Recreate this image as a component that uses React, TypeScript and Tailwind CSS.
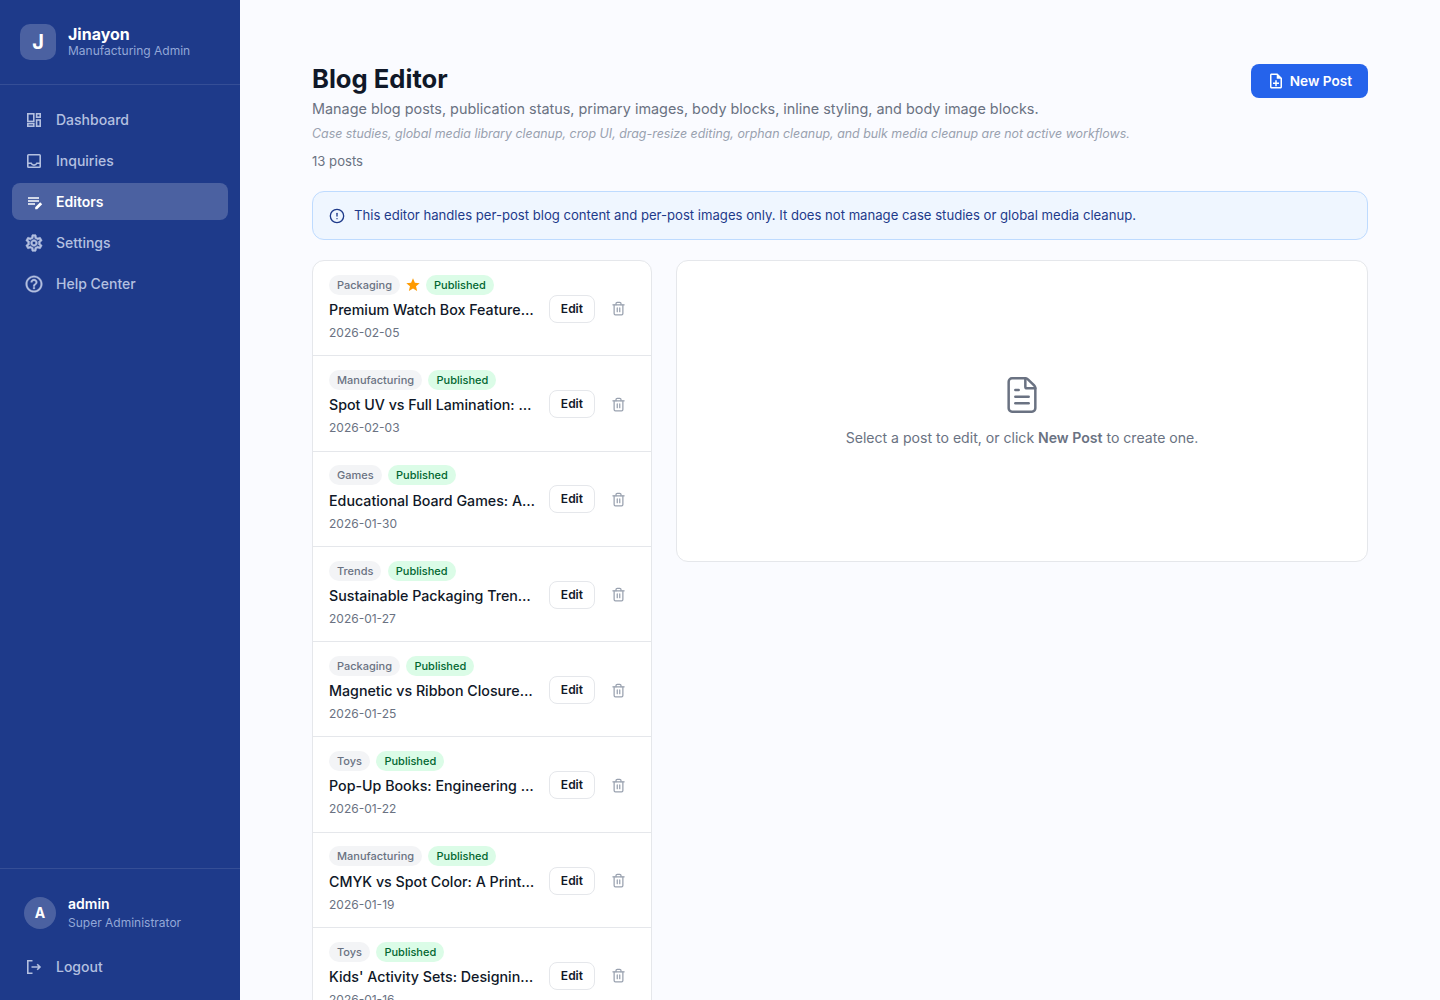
import { CircleAlert, FileText, Trash2 } from 'lucide-react';
import { MdOutlineNoteAdd, MdStar } from 'react-icons/md';

function DashboardIcon({ className }: { className?: string }) {
	return (
		<svg viewBox="0 0 20 20" fill="none" stroke="currentColor" strokeWidth="1.6" className={className}>
			<rect x="3.8" y="3.8" width="6" height="7.6" />
			<rect x="12.6" y="3.8" width="3.6" height="3.4" />
			<rect x="3.8" y="13.6" width="6" height="2.6" />
			<rect x="12.6" y="10" width="3.6" height="6.2" />
		</svg>
	);
}

function InboxIcon({ className }: { className?: string }) {
	return (
		<svg viewBox="0 0 20 20" fill="none" stroke="currentColor" strokeWidth="1.6" className={className}>
			<rect x="3.8" y="3.8" width="12.4" height="12.4" rx="0.8" />
			<path d="M4 12.2h3.2c.5 1.2 1.5 1.9 2.8 1.9s2.3-.7 2.8-1.9H16" />
		</svg>
	);
}

function EditNoteIcon({ className }: { className?: string }) {
	return (
		<svg viewBox="0 0 20 20" className={className}>
			<path d="M4 6h11M4 9h11M4 12h7" fill="none" stroke="currentColor" strokeWidth="1.5" />
			<path d="M11.2 17.2v-2l5-5 2 2-5 5z" fill="currentColor" />
		</svg>
	);
}

function SettingsIcon({ className }: { className?: string }) {
	return (
		<svg viewBox="0 0 24 24" fill="currentColor" stroke="currentColor" strokeWidth="0.7" className={className}>
			<path d="M19.43 12.98c.04-.32.07-.64.07-.98 0-.34-.03-.66-.07-.98l2.11-1.65c.19-.15.24-.42.12-.64l-2-3.46c-.09-.16-.26-.25-.44-.25-.06 0-.12.01-.17.03l-2.49 1c-.52-.4-1.08-.73-1.69-.98l-.38-2.65C14.46 2.18 14.25 2 14 2h-4c-.25 0-.46.18-.49.42l-.38 2.65c-.61.25-1.17.59-1.69.98l-2.49-1c-.06-.02-.12-.03-.18-.03-.17 0-.34.09-.43.25l-2 3.46c-.13.22-.07.49.12.64l2.11 1.65c-.04.32-.07.65-.07.98 0 .33.03.66.07.98l-2.11 1.65c-.19.15-.24.42-.12.64l2 3.46c.09.16.26.25.44.25.06 0 .12-.01.17-.03l2.49-1c.52.4 1.08.73 1.69.98l.38 2.65c.03.24.24.42.49.42h4c.25 0 .46-.18.49-.42l.38-2.65c.61-.25 1.17-.59 1.69-.98l2.49 1c.06.02.12.03.18.03.17 0 .34-.09.43-.25l2-3.46c.12-.22.07-.49-.12-.64l-2.11-1.65zm-1.98-1.71c.04.31.05.52.05.73 0 .21-.02.43-.05.73l-.14 1.13.89.7 1.08.84-.7 1.21-1.27-.51-1.04-.42-.9.68c-.43.32-.84.56-1.25.73l-1.06.43-.16 1.13-.2 1.35h-1.4l-.19-1.35-.16-1.13-1.06-.43c-.43-.18-.83-.41-1.23-.71l-.91-.7-1.06.43-1.27.51-.7-1.21 1.08-.84.89-.7-.14-1.13c-.03-.31-.05-.54-.05-.74s.02-.43.05-.73l.14-1.13-.89-.7-1.08-.84.7-1.21 1.27.51 1.04.42.9-.68c.43-.32.84-.56 1.25-.73l1.06-.43.16-1.13.2-1.35h1.39l.19 1.35.16 1.13 1.06.43c.43.18.83.41 1.23.71l.91.7 1.06-.43 1.27-.51.7 1.21-1.07.85-.89.7.14 1.13zM12 8c-2.21 0-4 1.79-4 4s1.79 4 4 4 4-1.79 4-4-1.79-4-4-4zm0 6c-1.1 0-2-.9-2-2s.9-2 2-2 2 .9 2 2-.9 2-2 2z" />
		</svg>
	);
}

function HelpIcon({ className }: { className?: string }) {
	return (
		<svg viewBox="0 0 24 24" fill="currentColor" stroke="currentColor" strokeWidth="0.4" className={className}>
			<path d="M11 18h2v-2h-2v2zm1-16C6.48 2 2 6.48 2 12s4.48 10 10 10 10-4.48 10-10S17.52 2 12 2zm0 18c-4.41 0-8-3.59-8-8s3.59-8 8-8 8 3.59 8 8-3.59 8-8 8zm0-14c-2.21 0-4 1.79-4 4h2c0-1.1.9-2 2-2s2 .9 2 2c0 2-3 1.75-3 5h2c0-2.25 3-2.5 3-5 0-2.21-1.79-4-4-4z" />
		</svg>
	);
}

function LogoutIcon({ className }: { className?: string }) {
	return (
		<svg viewBox="0 0 20 20" fill="none" stroke="currentColor" strokeWidth="1.6" className={className}>
			<path d="M8.5 3.8H3.8v12.4h4.7" />
			<path d="M7.5 10h8.5M13.2 7.2 16 10l-2.8 2.8" />
		</svg>
	);
}

const navItems = [
	{ label: 'Dashboard', icon: DashboardIcon },
	{ label: 'Inquiries', icon: InboxIcon },
	{ label: 'Editors', icon: EditNoteIcon, active: true },
	{ label: 'Settings', icon: SettingsIcon },
	{ label: 'Help Center', icon: HelpIcon },
];

const posts = [
	{ category: 'Packaging', title: 'Premium Watch Box Features That Sell', date: '2026-02-05', featured: true },
	{ category: 'Manufacturing', title: 'Spot UV vs Full Lamination: Which to Choose', date: '2026-02-03' },
	{ category: 'Games', title: 'Educational Board Games: A Design Guide', date: '2026-01-30' },
	{ category: 'Trends', title: 'Sustainable Packaging Trends for 2026', date: '2026-01-27' },
	{ category: 'Packaging', title: 'Magnetic vs Ribbon Closures Compared', date: '2026-01-25' },
	{ category: 'Toys', title: 'Pop-Up Books: Engineering Paper Mechanisms', date: '2026-01-22' },
	{ category: 'Manufacturing', title: 'CMYK vs Spot Color: A Print Buyer Guide', date: '2026-01-19' },
	{ category: 'Toys', title: "Kids' Activity Sets: Designing for Safety", date: '2026-01-16' },
];

function Sidebar() {
	return (
		<aside className="flex h-screen w-[240px] shrink-0 flex-col bg-[#1e3a8a]">
			<div className="flex h-[85px] items-center gap-3 border-b border-white/10 px-5">
				<div className="flex h-9 w-9 items-center justify-center rounded-[10px] bg-white/20 text-xl font-bold text-white">
					J
				</div>
				<div>
					<div className="text-base leading-[18px] font-bold text-white">Jinayon</div>
					<div className="text-xs leading-[16px] text-[#93a8d8]">Manufacturing Admin</div>
				</div>
			</div>
			<nav className="flex flex-1 flex-col gap-1 px-3 py-4">
				{navItems.map(({ label, icon: Icon, active }) => (
					<div
						key={label}
						className={`flex h-[37px] items-center gap-3 rounded-lg px-3 text-sm font-medium ${
							active ? 'bg-white/20 font-semibold text-white' : 'text-[#b4c0e0]'
						}`}
					>
						<Icon className="h-5 w-5" />
						<span>{label}</span>
					</div>
				))}
			</nav>
			<div className="border-t border-white/10 px-3 pt-[17px] pb-[15px]">
				<div className="flex items-center gap-3 px-3 py-2">
					<div className="flex h-8 w-8 items-center justify-center rounded-full bg-white/20 text-sm font-bold text-white">
						A
					</div>
					<div>
						<div className="text-sm leading-[20px] font-semibold text-white">admin</div>
						<div className="text-xs leading-[18px] text-[#93a8d8]">Super Administrator</div>
					</div>
				</div>
				<div className="mt-2 flex h-[37px] items-center gap-3 px-3 text-sm font-medium text-[#b4c0e0]">
					<LogoutIcon className="h-5 w-5" />
					<span>Logout</span>
				</div>
			</div>
		</aside>
	);
}

function PostRow({ category, title, date, featured }: (typeof posts)[number]) {
	return (
		<div className="flex items-center border-b border-gray-200 pt-[13.8px] pr-4 pb-[14.3px] pl-4 last:border-b-0">
			<div className="mr-3 min-w-0 flex-1">
				<div className="flex items-center gap-[6.4px]">
					<span className="rounded-full bg-gray-100 px-2 py-[3px] text-[11px] leading-[14px] font-medium text-gray-500">
						{category}
					</span>
					{featured && <MdStar className="-mx-[1.4px] h-4 w-4 text-amber-500" />}
					<span className="rounded-full bg-green-100 px-2 py-[3px] text-[11px] leading-[14px] font-medium text-green-800">
						Published
					</span>
				</div>
				<div className="mt-[4.2px] truncate text-[14.24px] leading-[21px] font-medium text-gray-900">{title}</div>
				<div className="mt-[5px] text-xs leading-[16px] text-gray-500">{date}</div>
			</div>
			<button className="mt-[2px] rounded-lg border border-gray-200 bg-white px-[11px] py-[5px] text-xs font-semibold text-gray-900">
				Edit
			</button>
			<button className="mt-[2px] ml-1.5 flex h-7 w-[34px] items-center justify-center text-gray-400">
				<Trash2 size={15} />
			</button>
		</div>
	);
}

export default function App() {
	return (
		<div className="flex h-screen overflow-hidden bg-[#fafbff] font-['Inter',sans-serif]">
			<Sidebar />
			<main className="min-w-0 flex-1 px-[72px] pt-16">
				<div className="flex items-start justify-between">
					<div>
						<h1 className="text-[25.6px] leading-[30px] font-bold text-gray-900">Blog Editor</h1>
						<p className="mt-1 text-[14.4px] leading-[22px] text-gray-500">
							Manage blog posts, publication status, primary images, body blocks, inline styling, and body image blocks.
						</p>
						<p className="mt-[5px] text-[12.4px] leading-[18px] text-gray-400 italic">
							Case studies, global media library cleanup, crop UI, drag-resize editing, orphan cleanup, and bulk media
							cleanup are not active workflows.
						</p>
						<p className="mt-2 text-[13.12px] leading-[20px] text-gray-500">13 posts</p>
					</div>
					<button className="flex h-[34px] items-center gap-[5px] rounded-lg bg-[#2563eb] px-4 text-[13.6px] font-semibold text-white">
						<MdOutlineNoteAdd className="h-[18px] w-[18px]" />
						New Post
					</button>
				</div>
				<div className="mt-5 flex h-[49px] items-center gap-[9px] rounded-xl border border-blue-200 bg-blue-50 px-4 text-[13.12px] text-[#1e3a8a]">
					<CircleAlert size={16} />
					<span>This editor handles per-post blog content and per-post images only. It does not manage case studies or global media cleanup.</span>
				</div>
				<div className="mt-5 flex items-start gap-6">
					<div className="w-[340px] shrink-0 rounded-xl border border-gray-200 bg-white">
						{posts.map((post) => (
							<PostRow key={post.date} {...post} />
						))}
					</div>
					<div className="flex h-[302px] flex-1 flex-col items-center justify-center rounded-xl border border-gray-200 bg-white pt-[2px]">
						<FileText size={40} strokeWidth={1.5} className="text-gray-500" />
						<p className="mt-3 text-[14.08px] text-gray-500">
							Select a post to edit, or click <strong className="font-semibold">New Post</strong> to create one.
						</p>
					</div>
				</div>
			</main>
		</div>
	);
}
